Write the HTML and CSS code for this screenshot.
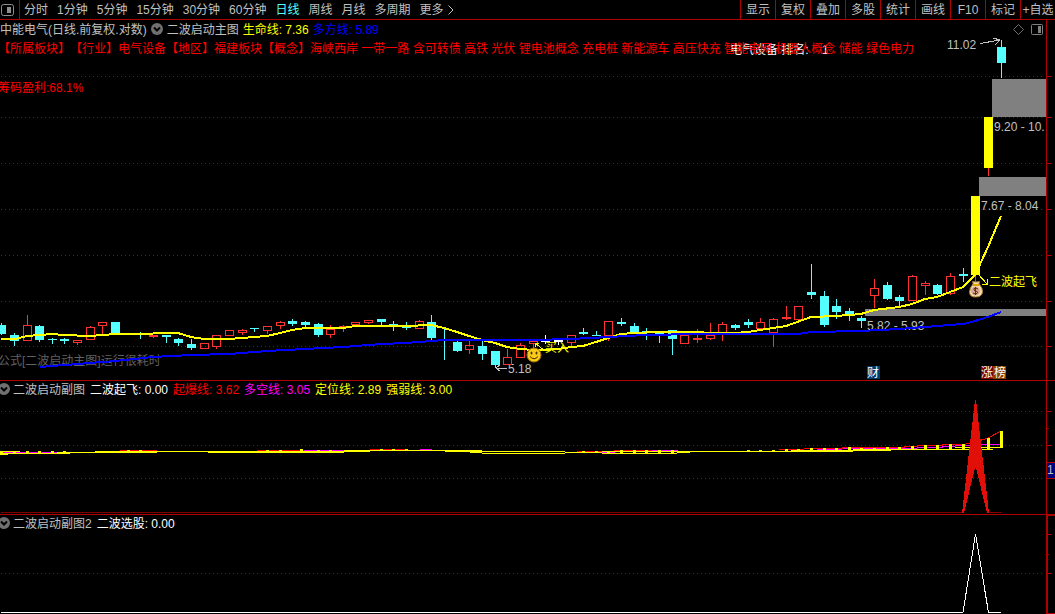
FILE: index.html
```html
<!DOCTYPE html>
<html lang="zh-CN">
<head>
    <meta charset="UTF-8">
    <meta name="viewport" content="width=device-width, initial-scale=1.0">
    <title>中能电气 日线</title>
    <link rel="stylesheet" href="styles.css">
</head>
<body>

<nav class="toolbar">
    <button class="layout-btn" aria-label="布局">
        <svg width="13" height="12" viewBox="0 0 13 12"><rect x="0.5" y="0.5" width="12" height="11" rx="2" fill="none" stroke="#909090"/><rect x="6" y="3" width="4" height="6" fill="#909090"/></svg>
    </button>
    <div class="periods">
        <button>分时</button>
        <button>1分钟</button>
        <button>5分钟</button>
        <button>15分钟</button>
        <button>30分钟</button>
        <button>60分钟</button>
        <button class="active">日线</button>
        <button>周线</button>
        <button>月线</button>
        <button>多周期</button>
        <button class="more">更多
            <svg width="6" height="10" viewBox="0 0 6 10"><path d="M0.5 0.5L5 5L0.5 9.5" fill="none" stroke="#c0c0c0"/></svg>
        </button>
    </div>
    <div class="tools">
        <button>显示</button>
        <button>复权</button>
        <button>叠加</button>
        <button>多股</button>
        <button>统计</button>
        <button>画线</button>
        <button>F10</button>
        <button>标记</button>
        <button>+自选</button>
    </div>
</nav>

<main class="charts">
    <!-- K线主图 -->
    <section class="panel panel-main">
        <svg class="chart" viewBox="0 20 1055 361" preserveAspectRatio="none">
            <g class="grid">
                <path d="M1 76.5H1045M1 117.5H1045M1 163.5H1045M1 209.5H1045M1 255.5H1045M1 301.5H1045M1 346.5H1045"/>
            </g>
            <g class="gap">
                <rect x="992" y="79" width="54" height="38"/>
                <rect x="979" y="177" width="67" height="19"/>
                <rect x="865" y="309" width="181" height="7"/>
            </g>
            <g class="values">
                <text x="508" y="373">5.18</text>
                <text x="867" y="330">5.82 - 5.93</text>
                <text x="981" y="210">7.67 - 8.04</text>
                <text x="994" y="131">9.20 - 10.</text>
                <text x="947" y="49">11.02</text>
            </g>
            <text class="notice" x="-2" y="365">公式[二波启动主图]运行很耗时</text>
            <g id="candles"></g>
            <polyline class="line-yellow" points="1,339 15,339 27,336 40,335 52,334 64,335 90,336 115,334 140,334 166,333 178,333 191,337 204,339 229,339 254,337 267,336 280,333 292,330 305,328 343,328 355,326 406,326 431,325 444,328 457,332 469,336 482,340 495,343 507,347 520,349 533,350 545,350 558,349 571,347 583,346 596,342 608,338 621,334 634,333 659,332 697,332 710,333 735,333 748,332 760,330 786,326 811,317 836,316 861,314 874,310 899,307 912,304 925,299 937,297 963,287 975,275 988,247 1001,216"/>
            <polyline class="line-blue" points="40,367 77,364 115,361 153,357 191,355 229,354 267,351 305,349 343,347 381,344 406,343 444,340 533,340 571,339 608,337 646,335 697,334 798,334 811,332 861,331 899,329 937,326 963,324 975,321 988,317 1001,312"/>
            <path class="arrow" d="M980 43.5L1000 40M993 38L1000 40L995 45M507 368.5H496M500 365L496 368L500 371"/>
            <path class="arrow arrow-yellow" d="M545 351L535 343M535 347V343H539M978 274L987 284M987 279V284H982"/>
            <text class="signal" x="545" y="352">买入</text>
            <text class="signal" x="989" y="286">二波起飞</text>
            <!-- 笑脸 -->
            <g class="smooth">
                <circle cx="534" cy="355" r="7" fill="#f8cc18" stroke="#a87000"/>
                <ellipse cx="531.5" cy="353" rx="1" ry="1.5" fill="#503000"/>
                <ellipse cx="536.5" cy="353" rx="1" ry="1.5" fill="#503000"/>
                <path d="M530 356.5Q534 361 538 356.5" fill="none" stroke="#503000"/>
            </g>
            <!-- 钱袋 -->
            <g class="smooth">
                <path d="M973 283L972.5 281.5L976 282L979.5 281.5L979 284Q983 288 982.5 292Q982 297 975.5 297Q969.5 297 969.5 292Q969.5 288 973 284Z" fill="#f8e0a8" stroke="#a87838"/>
                <path d="M973 285H979" stroke="#e0a000" stroke-width="2"/>
                <circle cx="975.5" cy="291" r="4.5" fill="#d8a898"/>
                <path d="M978 289Q976 287.5 974 288.5Q973 290.5 976 291Q979 292 977 293.5Q975 294.5 973 293M975.5 287V295" fill="none" stroke="#603010"/>
            </g>
            <g class="tags">
                <rect x="867" y="366" width="13" height="13" fill="#003870"/>
                <rect x="981" y="366" width="12" height="13" fill="#800000"/>
                <rect x="993" y="366" width="13" height="13" fill="#884000"/>
                <text x="867" y="377">财</text>
                <text x="981" y="377">涨</text>
                <text x="994" y="377">榜</text>
            </g>
            <path class="axis" d="M0 380.5H1055M1046.5 20V380M1047 76.5h5M1047 117.5h5M1047 163.5h5M1047 209.5h5M1047 255.5h5M1047 301.5h5M1047 346.5h5"/>
        </svg>
        <div class="info">
            <div class="legend">
                <span>中能电气(日线.前复权.对数)</span>
                <button class="fold" aria-label="主图指标"><svg width="12" height="12" viewBox="0 0 12 12"><circle cx="6" cy="6" r="6" fill="#707070"/><path d="M3 4.5L6 7.5L9 4.5" fill="none" stroke="#000" stroke-width="2"/></svg></button>
                <span>二波启动主图</span>
                <span class="yellow">生命线: 7.36</span>
                <span class="blue">多方线: 5.89</span>
                <div class="corner">
                    <svg width="11" height="11" viewBox="0 0 11 11"><path d="M5.5 0.5L10.5 5.5L5.5 10.5L0.5 5.5Z" fill="none" stroke="#707070"/></svg>
                    <svg width="12" height="11" viewBox="0 0 12 11"><rect x="0.5" y="0.5" width="11" height="10" rx="1" fill="none" stroke="#808080"/><rect x="7" y="2" width="3" height="7" fill="#808080"/></svg>
                </div>
            </div>
            <div class="concepts">
                <span class="rank">电气设备 排名:&nbsp;&nbsp;&nbsp; 1</span>
                <p>【所属板块】【行业】电气设备【地区】福建板块【概念】海峡西岸 一带一路 含可转债 高铁 光伏 锂电池概念 充电桩 新能源车 高压快充 智能电网 机器人概念 储能 绿色电力</p>
            </div>
            <p class="profit">筹码盈利:68.1%</p>
        </div>
    </section>

    <!-- 副图1 -->
    <section class="panel panel-sub">
        <svg class="chart" viewBox="0 381 1055 134" preserveAspectRatio="none">
            <g class="grid">
                <path d="M1 411.5H1042M1 445.5H1042M1 478.5H1042"/>
            </g>
            <path class="thin magenta" d="M3 452.5H90M295 450.5H345M420 449.5H432M600 452.5H615M652 450.5H678M779 451.5H791M817 449.5H842M842 448.5H917M917 447.5H942V446.5H955M955 445.5H980V444.5H1001"/>
            <path class="thin red" d="M3 451.5H20M120 450.5H157M257 450.5H304M370 449.5H407M577 451.5H602M614 450.5H652M741 451.5H775M779 449.5H804M804 448.5H842V447.5H880M880 447.5H904V446.5H917V445.5H942V444.5H964L975 442L988 438L1001 431"/>
            <path class="thin yellow-line" d="M0 454H8M0 453.5H70M0 451.5H20M57 452.5H157M95 451.5H344M208 452.5H344M344 450.5H482M344 451.5H370M445 451.5H482M470 452.5H482M482 451.5H565M482 453.5H565M565 452.5H602M602 451.5H677M602 453.5H677M677 452.5H690M677 451.5H853M791 450.5H891M853 449.5H917M917 449.5H993M955 447.5H993M993 446.5V447.5H1001"/>
            <g id="bars" fill="#ffff00"></g>
            <path class="thin dark" d="M1 512.5H963M988 512.5H1002"/>
            <path fill="#e01008" d="M962 513L975 400H976L989 513H987L976 468H975L964 513Z"/>
            <rect x="1047" y="463" width="8" height="15" fill="#000080"/>
            <text class="page" x="1047" y="474">1</text>
            <path class="axis" d="M0 514.5H1055M1046.5 381V515M1047 411.5h5M1047 428.5h2M1047 445.5h5M1047 462.5h8M1047 478.5h8"/>
        </svg>
        <div class="legend sub-legend">
            <button class="fold" aria-label="副图指标"><svg width="12" height="12" viewBox="0 0 12 12"><circle cx="6" cy="6" r="6" fill="#707070"/><path d="M3 4.5L6 7.5L9 4.5" fill="none" stroke="#000" stroke-width="2"/></svg></button>
            <span>二波启动副图</span>
            <span class="white">二波起飞: 0.00</span>
            <span class="red-text">起爆线: 3.62</span>
            <span class="magenta-text">多空线: 3.05</span>
            <span class="yellow">定位线: 2.89</span>
            <span class="yellow">强弱线: 3.00</span>
        </div>
    </section>

    <!-- 副图2 -->
    <section class="panel panel-sub2">
        <svg class="chart" viewBox="0 515 1055 99" preserveAspectRatio="none">
            <g class="grid">
                <path d="M1 573.5H1042"/>
            </g>
            <path class="thin white-line" d="M1 612.5H963L975.5 534L988.5 612.5H1001"/>
            <path class="axis" d="M1046.5 515V614M1047.5 515V614M1047 515.5h8M1047 534.5h5M1047 554.5h2M1047 573.5h5M1047 613.5h8"/>
        </svg>
        <div class="legend sub-legend">
            <button class="fold" aria-label="副图2指标"><svg width="12" height="12" viewBox="0 0 12 12"><circle cx="6" cy="6" r="6" fill="#707070"/><path d="M3 4.5L6 7.5L9 4.5" fill="none" stroke="#000" stroke-width="2"/></svg></button>
            <span>二波启动副图2</span>
            <span class="white">二波选股: 0.00</span>
        </div>
    </section>
</main>

<script src="script.js"></script>
</body>
</html>
```
FILE: styles.css
```css
* {
    box-sizing: border-box;
}
body {
    margin: 0;
    height: 100vh;
    display: flex;
    flex-direction: column;
    overflow: hidden;
    background-color: #000;
    color: #c0c0c0;
    font-family: "Liberation Sans", "Noto Sans CJK SC", sans-serif;
    font-size: 12px;
    text-spacing-trim: space-all;
}
p {
    margin: 0;
}
button {
    padding: 0;
    border: none;
    background: none;
    color: inherit;
    font: inherit;
    white-space: nowrap;
    cursor: pointer;
}
svg {
    display: block;
}

/* 顶部工具栏 */
.toolbar {
    display: flex;
    flex: none;
    height: 20px;
    border-bottom: 1px solid #b00000;
    line-height: 18px;
}
.layout-btn {
    width: 20px;
    padding-left: 1px;
    border-right: 1px solid #b00000;
}
.periods {
    display: flex;
    flex: 1;
    gap: 9px;
    padding-left: 4px;
}
.active {
    color: #54ffff;
}
.more {
    display: flex;
    align-items: center;
    gap: 4px;
}
.tools {
    display: flex;
}
.tools button {
    width: 35px;
    border-left: 1px solid #b00000;
}

/* 图表区域 */
.charts {
    flex: 1;
    min-height: 0;
    display: grid;
    grid-template-rows: 361fr 134fr 99fr;
}
.panel {
    display: grid;
    grid-template: minmax(0, 1fr) / minmax(0, 1fr);
    min-height: 0;
}
.panel > * {
    grid-area: 1 / 1;
}
.chart {
    width: 100%;
    height: 100%;
    shape-rendering: crispEdges;
}
.info {
    padding-top: 1px;
    line-height: 19px;
    white-space: nowrap;
}
.legend {
    display: flex;
    align-items: center;
    gap: 4px;
    line-height: 19px;
    white-space: nowrap;
}
.fold {
    padding-bottom: 3px;
}
.sub-legend {
    align-self: start;
    gap: 5px;
    padding-top: 1px;
    line-height: 17px;
}
.sub-legend .fold {
    margin-left: -2px;
    margin-right: -2px;
}
.corner {
    display: flex;
    gap: 7px;
    margin-left: auto;
    padding-right: 12px;
    padding-bottom: 2px;
}
.concepts {
    position: relative;
    color: #ff0000;
    text-indent: -2px;
}
.concepts p {
    position: relative;
}
.rank {
    position: absolute;
    left: 732px;
    top: 1px;
    color: #fff;
}
.profit {
    padding-top: 20px;
    color: #ff0000;
    text-indent: -2px;
}

.yellow {
    color: #ffff00;
}
.blue {
    color: #0000ff;
}
.white {
    color: #fff;
}
.red-text {
    color: #ff0000;
}
.magenta-text {
    color: #ff00ff;
}

/* SVG 线条 */
.grid path {
    stroke: #b00000;
    stroke-dasharray: 1 3;
}
.axis {
    fill: none;
    stroke: #b00000;
}
.gap {
    fill: #808080;
}
.values {
    fill: #c0c0c0;
}
.notice {
    fill: #606060;
}
.signal {
    fill: #ffff00;
}
.tags text {
    fill: #fff;
}
.page {
    fill: #c0c0c0;
}
.line-yellow, .line-blue {
    fill: none;
    stroke: #ffff00;
    stroke-width: 2;
}
.line-blue {
    stroke: #0000ff;
}
.arrow {
    fill: none;
    stroke: #c0c0c0;
}
.arrow-yellow {
    stroke: #ffff00;
}
.smooth {
    shape-rendering: auto;
}
.thin {
    fill: none;
    stroke-width: 1;
}
.magenta {
    stroke: #ff00ff;
}
.red {
    stroke: #ff0000;
}
.yellow-line {
    stroke: #ffff00;
}
.dark {
    stroke: #800000;
}
.white-line {
    stroke: #fff;
}
```
FILE: script.js
```javascript
// [x, 最高, 实体上, 实体下, 最低, 类型]  r 阳线 / c 阴线 / y 涨停 / w 信号
const candles = [
    [1, 323, 325, 334, 335, 'c'], [14, 333, 335, 341, 346, 'c'], [27, 315, 325, 341, 341, 'r'],
    [39, 325, 326, 340, 342, 'c'], [52, 338, 339, 340, 344, 'c'], [64, 338, 339, 341, 344, 'c'],
    [77, 340, 340, 343, 345, 'r'], [90, 326, 327, 340, 340, 'r'], [102, 322, 322, 326, 334, 'r'],
    [115, 322, 322, 334, 334, 'c'], [128, 333, 333, 334, 334, 'r'], [140, 332, 333, 334, 339, 'c'],
    [153, 335, 335, 337, 338, 'r'], [166, 335, 335, 337, 343, 'c'], [178, 338, 339, 343, 346, 'c'],
    [191, 339, 344, 348, 350, 'c'], [204, 343, 343, 349, 349, 'r'], [216, 335, 335, 347, 349, 'r'],
    [229, 330, 330, 336, 336, 'r'], [242, 329, 330, 333, 335, 'r'], [254, 328, 328, 329, 332, 'c'],
    [267, 326, 326, 331, 334, 'r'], [280, 321, 322, 326, 329, 'r'], [292, 319, 321, 324, 326, 'c'],
    [305, 321, 322, 325, 327, 'c'], [318, 323, 324, 335, 337, 'c'], [330, 325, 329, 335, 338, 'r'],
    [343, 325, 326, 328, 332, 'r'], [355, 322, 322, 325, 325, 'r'], [368, 320, 320, 323, 324, 'r'],
    [381, 319, 319, 322, 326, 'c'], [393, 321, 324, 325, 331, 'c'], [406, 322, 327, 328, 330, 'c'],
    [419, 320, 321, 329, 329, 'r'], [431, 315, 322, 338, 340, 'c'], [444, 328, 339, 340, 360, 'c'],
    [457, 339, 342, 351, 352, 'c'], [469, 341, 345, 350, 354, 'r'], [482, 341, 346, 354, 360, 'c'],
    [495, 351, 351, 365, 368, 'c'], [507, 349, 357, 365, 365, 'r'], [520, 343, 345, 358, 358, 'r'],
    [533, 341, 341, 344, 348, 'r'], [545, 335, 341, 342, 344, 'w'], [558, 340, 340, 342, 345, 'w'],
    [571, 335, 335, 343, 346, 'r'], [583, 328, 332, 334, 335, 'c'], [596, 331, 335, 336, 336, 'c'],
    [608, 321, 321, 336, 341, 'r'], [621, 318, 322, 324, 326, 'c'], [634, 323, 326, 333, 333, 'c'],
    [646, 328, 331, 332, 340, 'c'], [659, 333, 333, 334, 343, 'c'], [672, 330, 330, 339, 355, 'c'],
    [684, 335, 335, 344, 344, 'r'], [697, 329, 338, 340, 343, 'r'], [710, 323, 335, 339, 340, 'r'],
    [722, 322, 324, 334, 341, 'r'], [735, 324, 325, 328, 330, 'c'], [748, 319, 322, 325, 328, 'c'],
    [760, 318, 322, 329, 329, 'r'], [773, 318, 319, 333, 347, 'r'], [786, 306, 317, 319, 320, 'r'],
    [798, 306, 306, 320, 320, 'r'], [811, 264, 292, 295, 299, 'c'], [824, 291, 296, 325, 327, 'c'],
    [836, 299, 306, 312, 319, 'c'], [849, 308, 311, 314, 321, 'c'], [861, 316, 318, 321, 328, 'c'],
    [874, 279, 288, 296, 308, 'r'], [887, 282, 285, 299, 300, 'c'], [899, 295, 297, 301, 306, 'c'],
    [912, 275, 276, 301, 301, 'r'], [925, 281, 283, 286, 295, 'r'], [937, 284, 285, 294, 295, 'c'],
    [950, 273, 276, 294, 295, 'r'], [963, 268, 274, 276, 282, 'c'], [975, 196, 196, 275, 282, 'y'],
    [988, 117, 117, 168, 176, 'y'], [1001, 40, 47, 63, 78, 'c']
];

const colors = { r: '#ff3232', c: '#54ffff', y: '#ffff00', w: '#ffffff' };

function rect(x, y, w, h, color) {
    return `<rect x="${x}" y="${y}" width="${w}" height="${h}" fill="${color}"/>`;
}

// 画K线
function renderCandles() {
    let html = '';
    candles.forEach(([x, high, top, bottom, low, type]) => {
        const color = colors[type];
        const wick = type === 'y' ? colors.r : color;
        html += rect(x, high, 1, top - high, wick);
        html += rect(x, bottom, 1, low - bottom, wick);
        if (type === 'r' && bottom - top > 2) {
            html += `<rect x="${x - 3.5}" y="${top + 0.5}" width="8" height="${bottom - top - 1}" fill="none" stroke="${color}"/>`;
        } else {
            html += rect(x - 4, top, 9, bottom - top, color);
        }
    });
    document.getElementById('candles').innerHTML = html;
}

// 强弱线柱 [x, 上, 下]
const bars = [
    [1, 451, 454], [14, 451, 453], [27, 451, 453], [39, 451, 453], [52, 451, 453], [64, 451, 453],
    [128, 450, 452], [140, 450, 452], [267, 450, 452], [280, 450, 452], [301, 449, 452],
    [318, 450, 452], [330, 450, 452], [381, 449, 451], [393, 449, 451], [406, 449, 451],
    [583, 451, 453], [596, 451, 453], [608, 451, 454], [621, 450, 453], [634, 450, 453],
    [646, 450, 453], [659, 450, 453], [672, 450, 453], [748, 450, 452], [760, 450, 452],
    [773, 450, 452], [786, 449, 452], [798, 449, 451], [811, 448, 451], [824, 448, 451],
    [836, 448, 451], [849, 447, 450], [861, 448, 450], [874, 448, 450], [887, 447, 450],
    [899, 447, 450], [912, 446, 449], [925, 445, 449], [937, 445, 449], [950, 444, 449],
    [963, 444, 449], [988, 438, 449], [1001, 431, 448]
];

function renderBars() {
    document.getElementById('bars').innerHTML = bars
        .map(([x, top, bottom]) => `<rect x="${x - 1}" y="${top}" width="3" height="${bottom - top}"/>`)
        .join('');
}

renderCandles();
renderBars();
```
